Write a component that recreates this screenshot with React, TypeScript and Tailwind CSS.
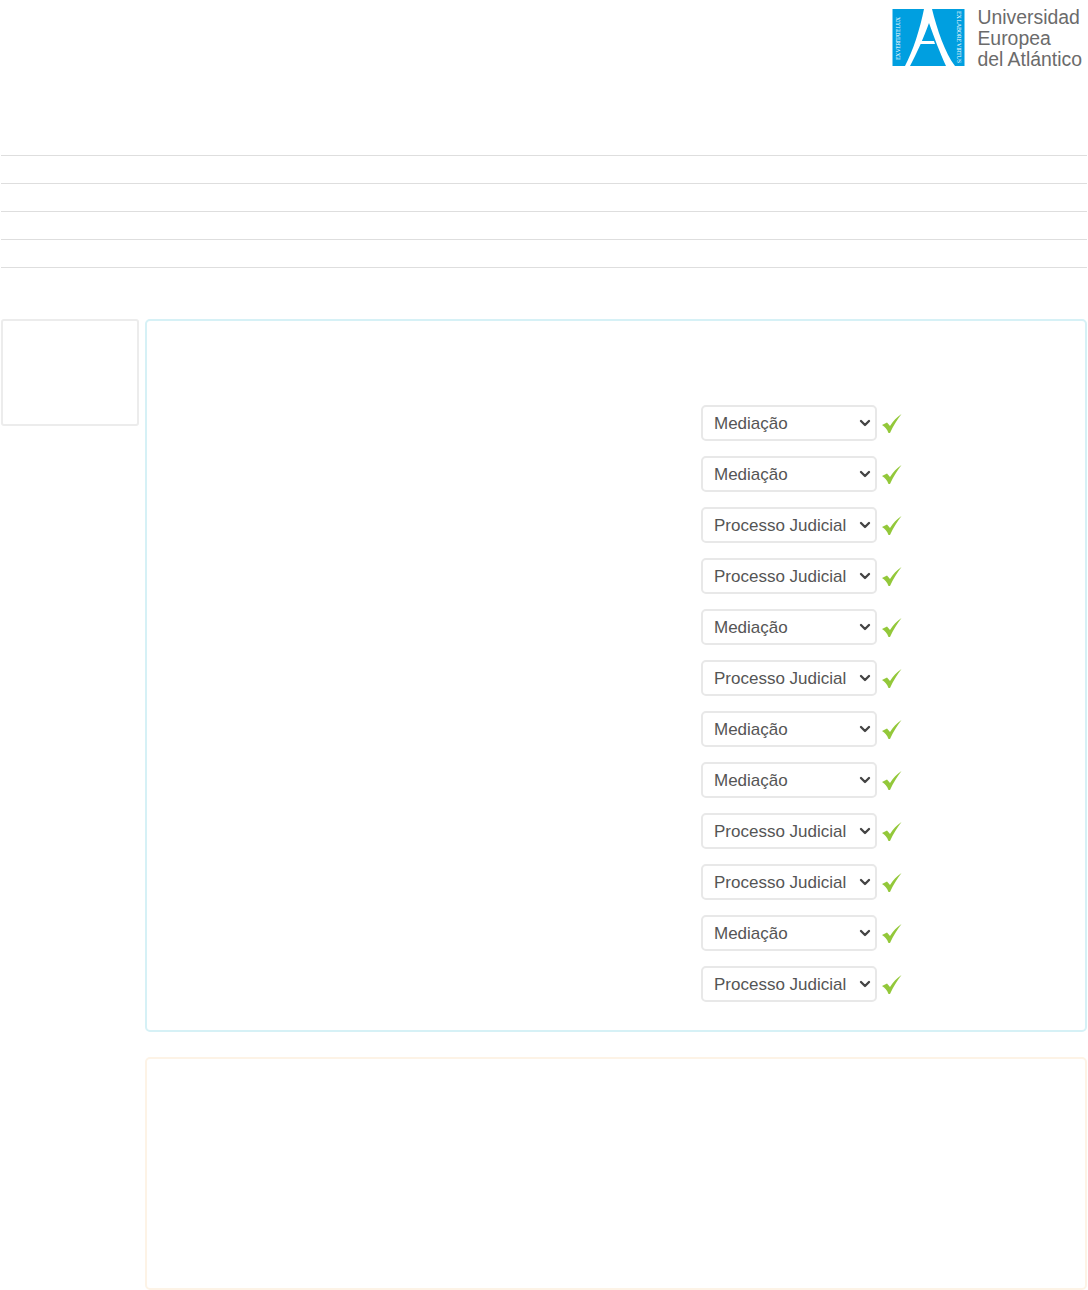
import { ChevronDown } from 'lucide-react';

const answers = [
  'Mediação',
  'Mediação',
  'Processo Judicial',
  'Processo Judicial',
  'Mediação',
  'Processo Judicial',
  'Mediação',
  'Mediação',
  'Processo Judicial',
  'Processo Judicial',
  'Mediação',
  'Processo Judicial',
];

function Logo() {
  return (
    <div className="mr-[5px] flex items-start gap-[11px]">
      <svg width="74" height="58" viewBox="0 0 74 58" className="mt-[9px] shrink-0">
        <rect x="0.5" y="0" width="72" height="57" fill="#009fe0" />
        <path d="M32 0 H40 C45 20 53 44 63 57 H54 C48 44 42 28 37 14 C32 28 25 44 18 57 H13 C21 42 28 20 32 0 Z" fill="#fff" />
        <path d="M25 32 H42 L43 35 H24 Z" fill="#fff" />
        <text
          transform="translate(8 51) rotate(-90)"
          fill="#fff"
          fontSize="6"
          fontFamily="'Liberation Serif', serif"
          textLength="43"
        >
          EX VERITATE LUX
        </text>
        <text
          transform="translate(65 2) rotate(90)"
          fill="#fff"
          fontSize="6"
          fontFamily="'Liberation Serif', serif"
          textLength="52"
        >
          EX LABORE VIRTUS
        </text>
      </svg>
      <div className="pt-[7px] text-[19.4px] leading-[21px] text-[#6b6b6b]">
        <div>Universidad</div>
        <div>Europea</div>
        <div>del Atlántico</div>
      </div>
    </div>
  );
}

function Check() {
  return (
    <svg width="20" height="20" viewBox="0 0 20 20" className="mt-[9px] shrink-0">
      <path
        d="M0 11 L5 8.5 L8 12 C11 7 15 3 19.5 0 C15 6 11 12 8 19 H6.5 C5 15 3 13 0 11 Z"
        fill="#93c83a"
      />
    </svg>
  );
}

export default function App() {
  return (
    <div className="h-[1290px] overflow-hidden bg-white pl-px pr-px font-['Liberation_Sans',Arial,sans-serif]">
      <header className="flex h-[155px] justify-end">
        <Logo />
      </header>

      <div className="h-[113px]">
        <div className="h-[28px] border-t border-[#dedede]" />
        <div className="h-[28px] border-t border-[#dedede]" />
        <div className="h-[28px] border-t border-[#dedede]" />
        <div className="h-[28px] border-t border-[#dedede]" />
        <div className="h-px border-t border-[#dedede]" />
      </div>

      <div className="mt-[51px] flex items-start gap-[6px]">
        <aside className="h-[107px] w-[138px] shrink-0 rounded-[3px] border-2 border-[#ececec]" />

        <div className="flex flex-1 flex-col gap-[25px]">
          <section className="flex h-[713px] flex-col gap-[15px] rounded-[5px] border-2 border-[#d6f1f6] pl-[554px] pt-[84px]">
            {answers.map((answer, i) => (
              <div key={i} className="flex items-start gap-[5px]">
                <div className="relative h-[36px] w-[176px]">
                  <select
                    defaultValue={answer}
                    className="h-full w-full appearance-none rounded-[5px] border-2 border-[#e8e8e8] bg-white pl-[11px] pt-[2px] text-[17px] text-[#555]"
                  >
                    <option>Mediação</option>
                    <option>Processo Judicial</option>
                  </select>
                  <ChevronDown
                    className="pointer-events-none absolute right-[4px] top-[10px] h-[16px] w-[16px] text-[#444]"
                    strokeWidth={3.5}
                  />
                </div>
                <Check />
              </div>
            ))}
          </section>

          <section className="h-[233px] rounded-[5px] border-2 border-[#fdf3e6]" />
        </div>
      </div>
    </div>
  );
}
